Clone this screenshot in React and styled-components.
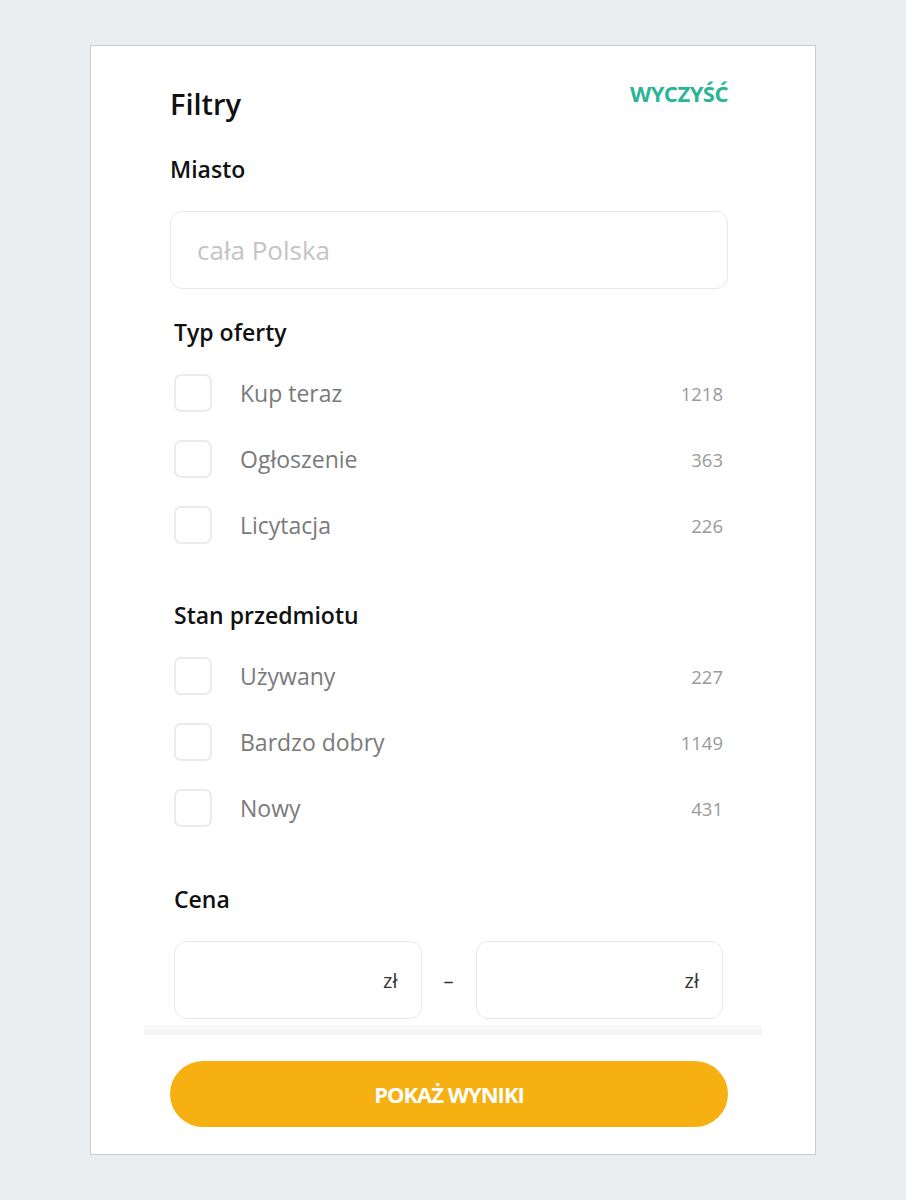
import React, { useState } from 'react'
import styled, { createGlobalStyle } from 'styled-components'

const GlobalStyle = createGlobalStyle`
  body{
    margin:0;
    background:#eaeef1;
    font-family:"Open Sans", "Noto Sans", sans-serif;
  }
`

const typOferty = [
  { label: 'Kup teraz', count: 1218 },
  { label: 'Ogłoszenie', count: 363 },
  { label: 'Licytacja', count: 226 },
]

const stan = [
  { label: 'Używany', count: 227 },
  { label: 'Bardzo dobry', count: 1149 },
  { label: 'Nowy', count: 431 },
]

const CheckList = ({ items, checked, onToggle }) => (
  <List>
    {items.map((item) => (
      <Row key={item.label} onClick={() => onToggle(item.label)}>
        <Box $on={!!checked[item.label]} />
        <Label>{item.label}</Label>
        <Count>{item.count}</Count>
      </Row>
    ))}
  </List>
)

const App = () => {
  const [checked, setChecked] = useState({})
  const toggle = (name) => setChecked((prev) => ({ ...prev, [name]: !prev[name] }))

  return (
    <Page>
      <GlobalStyle />
      <Card>
        <Header>
          <Title>Filtry</Title>
          <Clear type="button" onClick={() => setChecked({})}>WYCZYŚĆ</Clear>
        </Header>

        <Heading>Miasto</Heading>
        <CityInput placeholder="cała Polska" />

        <Section>
          <Heading>Typ oferty</Heading>
          <CheckList items={typOferty} checked={checked} onToggle={toggle} />
        </Section>

        <Section $gap>
          <Heading>Stan przedmiotu</Heading>
          <CheckList items={stan} checked={checked} onToggle={toggle} />
        </Section>

        <Section $gap $last>
          <Heading>Cena</Heading>
          <PriceRow>
            <PriceBox>
              <PriceInput />
              <Unit>zł</Unit>
            </PriceBox>
            <Dash>–</Dash>
            <PriceBox>
              <PriceInput />
              <Unit>zł</Unit>
            </PriceBox>
          </PriceRow>
        </Section>

        <Fade />
        <Footer>
          <Submit type="button">POKAŻ WYNIKI</Submit>
        </Footer>
      </Card>
    </Page>
  )
}

export default App

const Page = styled.div`
  padding:45px 90px;
`

const Card = styled.div`
  width:726px;
  height:1110px;
  background:#fff;
  border:1px solid #c9cccf;
  padding:0 87px 0 79px;
  box-sizing:border-box;
  display:flex;
  flex-direction:column;
`

const Header = styled.div`
  display:flex;
  justify-content:space-between;
  align-items:flex-start;
  padding-top:38px;
  margin-bottom:27px;
`

const Title = styled.h1`
  margin:0;
  font-size:29px;
  line-height:40px;
  font-weight:600;
  color:#111;
`

const Clear = styled.button`
  border:none;
  background:none;
  padding:0;
  margin-top:-6px;
  font-family:inherit;
  font-size:22px;
  line-height:30px;
  font-weight:700;
  letter-spacing:-0.5px;
  color:#2bb597;
  cursor:pointer;
`

const Heading = styled.h2`
  margin:0;
  font-size:23px;
  line-height:36px;
  font-weight:600;
  color:#111;
`

const CityInput = styled.input`
  margin-top:24px;
  height:78px;
  box-sizing:border-box;
  border:1.5px solid #e8e8e8;
  border-radius:12px;
  padding:0 26px;
  font-family:inherit;
  font-size:26px;
  color:#333;
  outline:none;
  &::placeholder{
    color:#c4c4c4;
  }
`

const Section = styled.div`
  padding:0 5px 0 4px;
  margin-top:${(p) => (p.$gap ? (p.$last ? '54px' : '53px') : '25px')};
`

const List = styled.div`
  margin-top:24px;
  display:flex;
  flex-direction:column;
  gap:28px;
`

const Row = styled.div`
  display:flex;
  align-items:center;
  height:38px;
  cursor:pointer;
`

const Box = styled.span`
  width:38px;
  height:38px;
  box-sizing:border-box;
  border:2px solid ${(p) => (p.$on ? '#2bb597' : '#ebebeb')};
  background:${(p) => (p.$on ? '#2bb597' : '#fff')};
  border-radius:7px;
  flex-shrink:0;
`

const Label = styled.span`
  margin-left:28px;
  flex:1;
  font-size:23px;
  color:#7a7a7a;
`

const Count = styled.span`
  font-size:18.5px;
  color:#9a9a9a;
`

const PriceRow = styled.div`
  margin-top:24px;
  display:flex;
  align-items:center;
`

const PriceBox = styled.label`
  flex:1;
  min-width:0;
  height:78px;
  box-sizing:border-box;
  border:1.5px solid #e8e8e8;
  border-radius:12px;
  display:flex;
  align-items:center;
  padding:0 23px 0 20px;
`

const PriceInput = styled.input`
  flex:1;
  width:100%;
  min-width:0;
  border:none;
  outline:none;
  padding:0;
  font-family:inherit;
  font-size:20px;
  text-align:right;
`

const Unit = styled.span`
  font-size:20px;
  color:#333;
  margin-left:6px;
`

const Dash = styled.span`
  width:54px;
  flex-shrink:0;
  text-align:center;
  font-size:20px;
  color:#333;
`

const Fade = styled.div`
  margin:6px -34px 0 -26px;
  height:10px;
  background:linear-gradient(to bottom, rgba(240,240,240,0.3), #f3f3f3);
`

const Footer = styled.div`
  padding-top:26px;
`

const Submit = styled.button`
  width:100%;
  height:66px;
  border:none;
  border-radius:33px;
  background:#f7b012;
  color:#fff;
  font-family:inherit;
  font-size:22px;
  font-weight:700;
  letter-spacing:-1px;
  cursor:pointer;
`
